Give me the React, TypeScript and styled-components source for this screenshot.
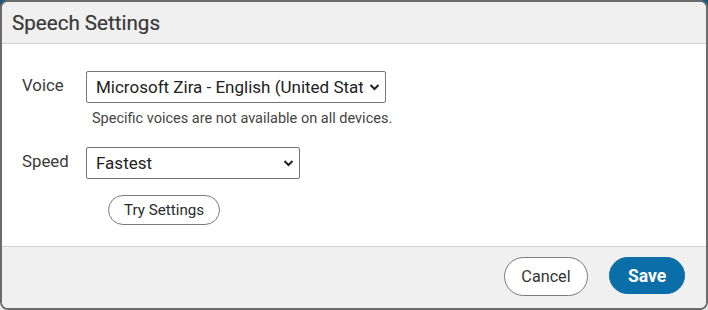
import React from "react";
import styled, { createGlobalStyle } from "styled-components";

const GlobalStyle = createGlobalStyle`
  html, body {
    margin: 0;
    padding: 0;
  }
  body {
    width: 708px;
    height: 310px;
    background: linear-gradient(to bottom, #1c557d 0%, #1c557d 40%, #e8e8e8 60%, #e8e8e8 100%);
    font-family: Roboto, "Liberation Sans", sans-serif;
  }
`;

const Dialog = styled.div`
  width: 708px;
  height: 310px;
  box-sizing: border-box;
  border: 2px solid #6b6b6b;
  border-radius: 8px;
  overflow: hidden;
  display: flex;
  flex-direction: column;
  background: #ffffff;
`;

const Header = styled.div`
  height: 42px;
  box-sizing: border-box;
  padding: 1px 10px 0;
  display: flex;
  align-items: center;
  background: #f0f0f0;
  border-bottom: 1px solid #d2d2d2;
`;

const Title = styled.h2`
  margin: 0;
  font-size: 20.6px;
  font-weight: 400;
  color: #383838;
  -webkit-text-stroke: 0.2px #383838;
`;

const Body = styled.div`
  flex: 1;
  padding: 27px 20px 0;
  display: grid;
  grid-template-columns: 64px auto;
  grid-auto-rows: min-content;
  align-items: start;
  color: #333;
`;

const Label = styled.div`
  font-size: 16.8px;
  line-height: 29px;
  color: #3a3a3a;
`;

const SelectBox = styled.div<{ $width: number }>`
  width: ${(p) => p.$width}px;
  height: 32px;
  box-sizing: border-box;
  border: 1px solid #767676;
  border-radius: 2px;
  padding: 0 5px 0 9px;
  display: flex;
  align-items: center;
  gap: 6px;
  background: #fff;
`;

const SelectText = styled.span`
  flex: 1;
  overflow: hidden;
  white-space: nowrap;
  font-size: 17px;
  color: #222;
`;

const Hint = styled.div`
  grid-column: 2;
  padding: 7px 0 0 6px;
  margin-bottom: 19px;
  font-size: 14.5px;
  line-height: 18px;
  color: #444;
`;

const Spacer = styled.div``;

const Actions = styled.div`
  grid-column: 2;
  padding: 16px 0 0 22px;
`;

const PillButton = styled.button`
  height: 30px;
  padding: 0 15px;
  border: 1px solid #7a7a7a;
  border-radius: 15px;
  background: #fff;
  font-family: inherit;
  font-size: 15.2px;
  color: #2b2b2b;
`;

const Footer = styled.div`
  height: 62px;
  box-sizing: border-box;
  border-top: 1px solid #d2d2d2;
  background: #f0f0f0;
  padding: 0 21px 2px 0;
  display: flex;
  align-items: center;
  justify-content: flex-end;
  gap: 21px;
`;

const FooterButton = styled.button<{ $primary?: boolean }>`
  height: ${(p) => (p.$primary ? 37 : 39)}px;
  min-width: ${(p) => (p.$primary ? 76 : 84)}px;
  padding: 0 16px;
  border-radius: 20px;
  border: 1px solid ${(p) => (p.$primary ? "#0a6ea8" : "#7a7a7a")};
  background: ${(p) => (p.$primary ? "#0a6ea8" : "#fff")};
  color: ${(p) => (p.$primary ? "#fff" : "#333")};
  font-family: inherit;
  font-size: ${(p) => (p.$primary ? 17.5 : 16.2)}px;
  font-weight: ${(p) => (p.$primary ? 700 : 400)};
  margin-top: ${(p) => (p.$primary ? -2 : 0)}px;
`;

const Chevron = () => (
  <svg width="11" height="8" viewBox="0 0 11 8">
    <path d="M1.5 2 L5.5 6 L9.5 2" fill="none" stroke="#222" strokeWidth="2" />
  </svg>
);

interface SelectProps {
  value: string;
  width: number;
}

const FakeSelect: React.FC<SelectProps> = ({ value, width }) => (
  <SelectBox $width={width}>
    <SelectText>{value}</SelectText>
    <Chevron />
  </SelectBox>
);

const App: React.FC = () => {
  return (
    <>
      <GlobalStyle />
      <Dialog>
        <Header>
          <Title>Speech Settings</Title>
        </Header>
        <Body>
          <Label>Voice</Label>
          <FakeSelect value="Microsoft Zira - English (United States)" width={300} />
          <Hint>Specific voices are not available on all devices.</Hint>
          <Label>Speed</Label>
          <FakeSelect value="Fastest" width={214} />
          <Spacer />
          <Actions>
            <PillButton>Try Settings</PillButton>
          </Actions>
        </Body>
        <Footer>
          <FooterButton>Cancel</FooterButton>
          <FooterButton $primary>Save</FooterButton>
        </Footer>
      </Dialog>
    </>
  );
};

export default App;
